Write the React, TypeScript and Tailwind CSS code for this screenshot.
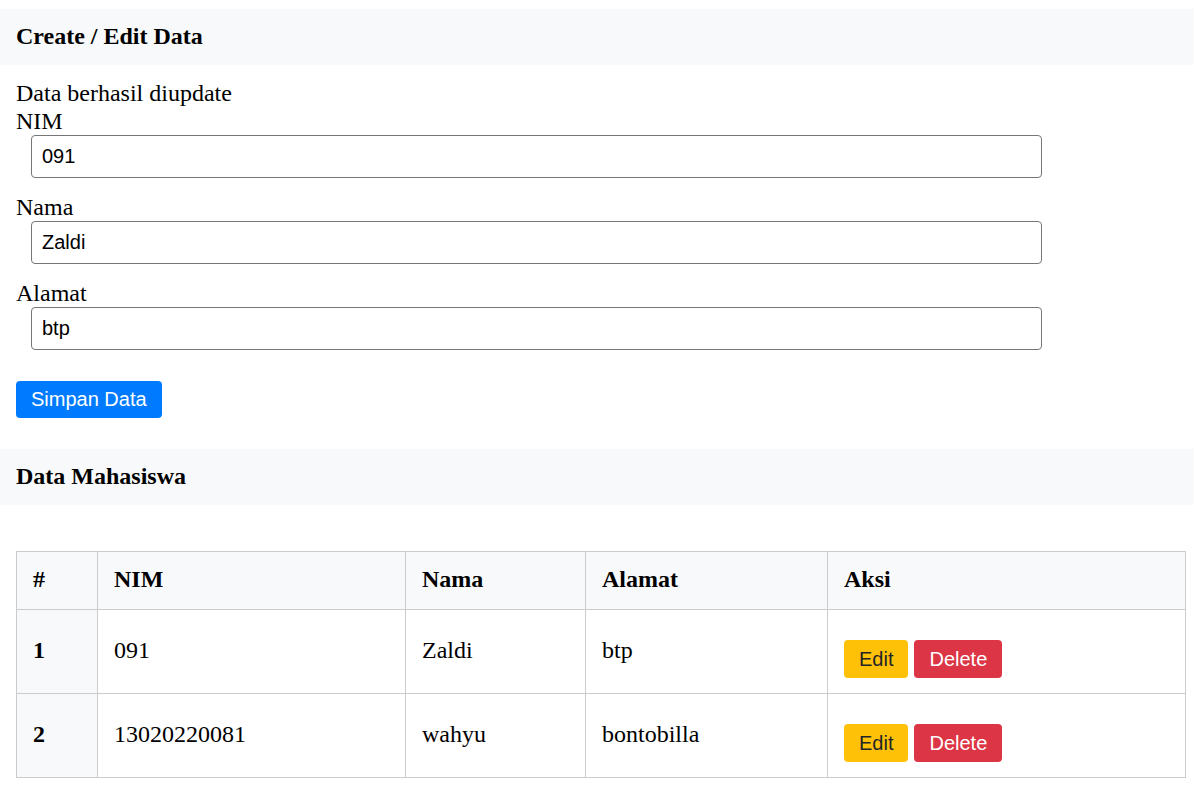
const rows = [
  { no: 1, nim: "091", nama: "Zaldi", alamat: "btp" },
  { no: 2, nim: "13020220081", nama: "wahyu", alamat: "bontobilla" },
];

const fields = [
  { id: "nim", label: "NIM", value: "091" },
  { id: "nama", label: "Nama", value: "Zaldi" },
  { id: "alamat", label: "Alamat", value: "btp" },
];

function SectionHeader({ title }: { title: string }) {
  return (
    <div className="flex h-[56px] items-center bg-[#f8f9fa] pl-4">
      <h3 className="text-[24px] font-bold">{title}</h3>
    </div>
  );
}

export default function App() {
  return (
    <div className="min-h-[791px] bg-white pt-[9px] font-['Liberation_Serif',serif] text-[24px] leading-[27.6px] text-black">
      <SectionHeader title="Create / Edit Data" />

      <form className="pt-[15px] pl-4" onSubmit={(e) => e.preventDefault()}>
        <div>Data berhasil diupdate</div>
        {fields.map((f) => (
          <div key={f.id}>
            <label htmlFor={f.id} className="block">
              {f.label}
            </label>
            <input
              id={f.id}
              type="text"
              defaultValue={f.value}
              className="mb-[15.4px] ml-[15px] block h-[43px] w-[1011px] rounded-[4px] border border-[#767676] px-[10px] font-['Liberation_Sans',Arial,sans-serif] text-[20px] text-black outline-none"
            />
          </div>
        ))}
        <button
          type="submit"
          className="mt-[15px] mb-[31px] h-[37px] rounded-[4px] bg-[#007bff] px-[15px] font-['Liberation_Sans',Arial,sans-serif] text-[20px] leading-none text-white"
        >
          Simpan Data
        </button>
      </form>

      <SectionHeader title="Data Mahasiswa" />

      <div className="pt-[46px] pl-4 pr-2">
        <table className="w-[1170px] border-collapse border border-[#cccccc]">
          <thead>
            <tr className="h-[58px] bg-[#f8f9fa] text-left">
              <th className="w-[81px] border border-[#cccccc] px-4 align-middle">#</th>
              <th className="w-[308px] border border-[#cccccc] px-4 align-middle">NIM</th>
              <th className="w-[180px] border border-[#cccccc] px-4 align-middle">Nama</th>
              <th className="w-[242px] border border-[#cccccc] px-4 align-middle">Alamat</th>
              <th className="border border-[#cccccc] px-4 align-middle">Aksi</th>
            </tr>
          </thead>
          <tbody>
            {rows.map((r) => (
              <tr key={r.no} className="h-[84px]">
                <th className="border border-[#cccccc] bg-[#f8f9fa] px-4 text-left align-middle">{r.no}</th>
                <td className="border border-[#cccccc] px-4 align-middle">{r.nim}</td>
                <td className="border border-[#cccccc] px-4 align-middle">{r.nama}</td>
                <td className="border border-[#cccccc] px-4 align-middle">{r.alamat}</td>
                <td className="border border-[#cccccc] px-4 pt-[30px] pb-[15px] align-top">
                  <div className="flex gap-[6px] font-['Liberation_Sans',Arial,sans-serif] text-[20px] leading-none">
                    <button className="h-[38px] rounded-[4px] bg-[#ffc107] px-[15px] text-[#212529]">Edit</button>
                    <button className="h-[38px] rounded-[4px] bg-[#dc3545] px-[15px] text-white">Delete</button>
                  </div>
                </td>
              </tr>
            ))}
          </tbody>
        </table>
      </div>
    </div>
  );
}
